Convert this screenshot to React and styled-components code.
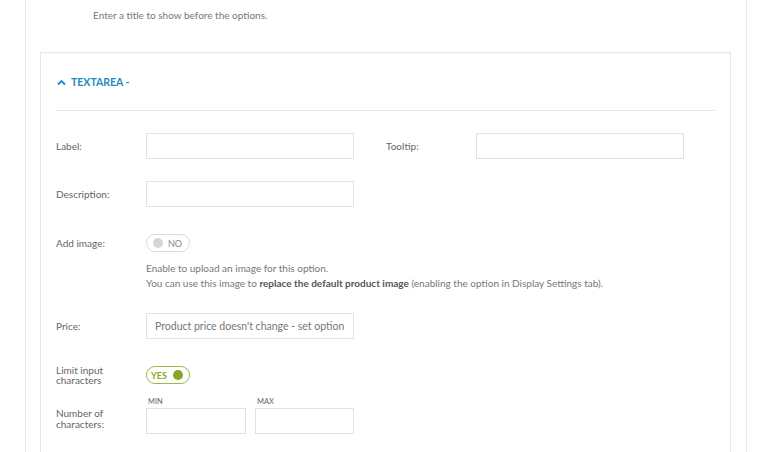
import React from 'react';
import styled, { createGlobalStyle } from 'styled-components';

const GlobalStyle = createGlobalStyle`
  body {
    margin: 0;
    background: #fff;
    font-family: Lato, "Open Sans", "Liberation Sans", sans-serif;
    color: #666;
  }
`;

const Page = styled.div`
  padding-left: 25px;
  width: 722px;
  height: 452px;
  overflow: hidden;
`;

const Panel = styled.div`
  border-left: 1px solid #e9e9e9;
  border-right: 1px solid #e9e9e9;
  min-height: 452px;
  box-sizing: border-box;
`;

const Hint = styled.p`
  margin: 0;
  padding: 8px 0 0 67px;
  font-size: 10px;
  line-height: 15px;
  color: #777;
`;

const Card = styled.section`
  margin: 29px 15px 0 14px;
  border: 1px solid #e6e6e6;
  border-bottom: none;
  padding: 0 15px;
  min-height: 400px;
`;

const Header = styled.div`
  display: flex;
  align-items: center;
  gap: 5px;
  padding: 22px 0 21px;
  border-bottom: 1px solid #e6e6e6;
  line-height: 14px;
`;

const Title = styled.span`
  color: #1f8ac4;
  font-weight: 700;
  font-size: 10.5px;
`;

const Chevron = () => (
  <svg width="9" height="7" viewBox="0 0 9 7" style={{ display: 'block', marginLeft: 1 }}>
    <path d="M1 5.5 L4.5 2 L8 5.5" fill="none" stroke="#1f8ac4" strokeWidth="1.8" />
  </svg>
);

const Row = styled.div`
  display: flex;
  align-items: ${(p) => p.$align || 'center'};
  margin-top: ${(p) => p.$top}px;
  min-height: 26px;
`;

const Label = styled.label`
  width: 90px;
  flex-shrink: 0;
  font-size: 10px;
  line-height: ${(p) => (p.$tight ? '10.5px' : '14px')};
  padding-bottom: ${(p) => p.$pb || 0}px;
  color: #666;
`;

const Input = styled.div`
  width: ${(p) => p.$w || 208}px;
  height: 26px;
  box-sizing: border-box;
  border: 1px solid #e2e2e2;
  background: #fff;
  font-size: 10.5px;
  line-height: 24px;
  padding-left: 8px;
  color: #777;
  white-space: nowrap;
  overflow: hidden;
`;

const Spacer = styled.div`
  width: ${(p) => p.$w}px;
  flex-shrink: 0;
`;

const Toggle = styled.div`
  width: 44px;
  height: 18px;
  box-sizing: border-box;
  border-radius: 9px;
  border: 1px solid ${(p) => (p.$on ? '#9cb84a' : '#dcdcdc')};
  display: flex;
  align-items: center;
  flex-direction: ${(p) => (p.$on ? 'row-reverse' : 'row')};
  justify-content: flex-end;
  gap: 5px;
  padding: 0 4px;
`;

const Dot = styled.span`
  width: 10px;
  height: 10px;
  border-radius: 50%;
  background: ${(p) => (p.$on ? '#87a528' : '#d6d6d6')};
`;

const ToggleText = styled.span`
  font-size: 9px;
  font-weight: ${(p) => (p.$on ? 700 : 400)};
  color: ${(p) => (p.$on ? '#87a528' : '#888')};
  width: ${(p) => (p.$on ? 'auto' : '17px')};
  margin-right: ${(p) => (p.$on ? '1px' : '0')};
`;

const Help = styled.div`
  margin: 5px 0 0 90px;
  font-size: 10px;
  line-height: 15px;
  color: #777;
  b {
    color: #555;
    font-weight: 700;
  }
`;

const Fields = styled.div`
  display: flex;
  gap: 9px;
`;

const Field = styled.div`
  display: flex;
  flex-direction: column;
`;

const Tiny = styled.span`
  font-size: 7.5px;
  line-height: 9px;
  color: #666;
  padding-left: 2px;
  margin-bottom: 2px;
`;

const App = () => {
  return (
    <Page>
      <GlobalStyle />
      <Panel>
        <Hint>Enter a title to show before the options.</Hint>
        <Card>
          <Header>
            <Chevron />
            <Title>TEXTAREA -</Title>
          </Header>

          <Row $top={22}>
            <Label>Label:</Label>
            <Input />
            <Spacer $w={32} />
            <Label>Tooltip:</Label>
            <Input />
          </Row>

          <Row $top={22}>
            <Label>Description:</Label>
            <Input />
          </Row>

          <Row $top={23}>
            <Label>Add image:</Label>
            <Toggle>
              <Dot />
              <ToggleText>NO</ToggleText>
            </Toggle>
          </Row>
          <Help>
            Enable to upload an image for this option.
            <br />
            You can use this image to <b>replace the default product image</b> (enabling the option in Display Settings tab).
          </Help>

          <Row $top={22}>
            <Label>Price:</Label>
            <Input>Product price doesn't change - set option</Input>
          </Row>

          <Row $top={23}>
            <Label $tight>
              Limit input
              <br />
              characters
            </Label>
            <Toggle $on>
              <Dot $on />
              <ToggleText $on>YES</ToggleText>
            </Toggle>
          </Row>

          <Row $top={9} $align="flex-end">
            <Label $tight $pb={5}>
              Number of
              <br />
              characters:
            </Label>
            <Fields>
              <Field>
                <Tiny>MIN</Tiny>
                <Input $w={100} />
              </Field>
              <Field>
                <Tiny>MAX</Tiny>
                <Input $w={99} />
              </Field>
            </Fields>
          </Row>
        </Card>
      </Panel>
    </Page>
  );
};

export default App;
